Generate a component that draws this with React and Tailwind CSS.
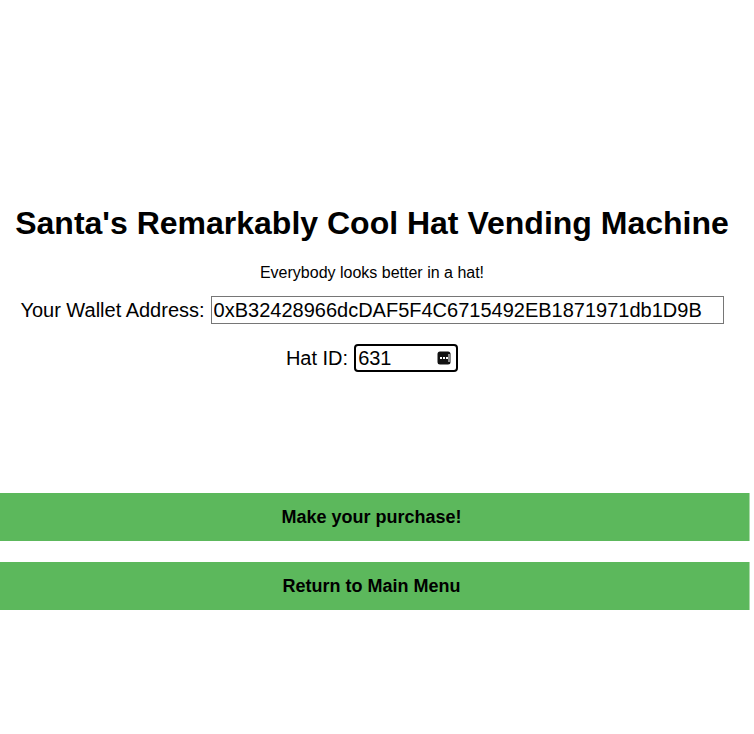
import { useState } from 'react'

function SpinIcon() {
  return (
    <svg width="14" height="14" viewBox="0 0 14 14" className="shrink-0">
      <rect x="0.5" y="0.5" width="13" height="13" rx="2.5" fill="#111" />
      <rect x="3" y="6" width="2" height="2" fill="#fff" />
      <rect x="6" y="6" width="2" height="2" fill="#fff" />
      <rect x="9" y="6" width="2" height="2" fill="#fff" />
      <rect x="11.5" y="3" width="1" height="8" fill="#fff" />
    </svg>
  )
}

export default function App() {
  const [wallet, setWallet] = useState('0xB32428966dcDAF5F4C6715492EB1871971db1D9B')
  const [hatId, setHatId] = useState('631')

  return (
    <div className="w-[764px] bg-white text-black font-['Liberation_Sans',Arial,sans-serif]">
      <div className="w-[744px] flex flex-col items-center pt-[205px] pb-[110px]">
        <h1 className="text-[32px] leading-[37px] font-bold">Santa's Remarkably Cool Hat Vending Machine</h1>
        <p className="mt-[22px] text-[16px] leading-[18px]">Everybody looks better in a hat!</p>

        <div className="mt-[13px] flex items-center gap-[6px] text-[20px]">
          <label>Your Wallet Address:</label>
          <input
            className="w-[513px] h-[28px] px-[2px] border border-[#767676] text-[20px] outline-none"
            value={wallet}
            onChange={e => setWallet(e.target.value)}
          />
        </div>

        <div className="mt-[18px] flex items-center gap-[6px] text-[20px]">
          <label>Hat ID:</label>
          <div className="w-[104px] h-[28px] flex items-center pl-[2px] pr-[5px] border-2 border-black rounded-[4px]">
            <input
              className="w-0 flex-1 text-[20px] outline-none"
              value={hatId}
              onChange={e => setHatId(e.target.value)}
            />
            <SpinIcon />
          </div>
        </div>

        <div className="mt-[120px] self-start flex flex-col gap-[21px]">
          <button className="w-[750px] h-[48px] pr-[6px] bg-[#5cb85c] border-r border-[#a8d9a8] text-[18px] font-bold">
            Make your purchase!
          </button>
          <button className="w-[750px] h-[48px] pr-[6px] bg-[#5cb85c] border-r border-[#a8d9a8] text-[18px] font-bold">
            Return to Main Menu
          </button>
        </div>
      </div>
    </div>
  )
}
